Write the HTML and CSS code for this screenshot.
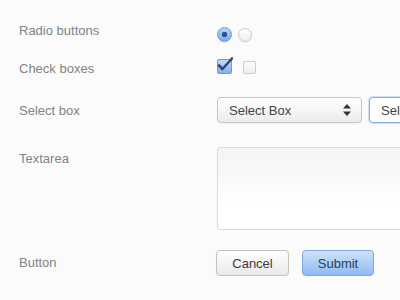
FILE: index.html
```html
<!DOCTYPE html>
<html lang="en">
<head>
    <meta charset="UTF-8">
    <meta name="viewport" content="width=device-width, initial-scale=1.0">
    <title>Form Elements</title>
    <link rel="stylesheet" href="styles.css">
</head>
<body>
    <form class="form">
        <div class="row row-radio">
            <div class="label">Radio buttons</div>
            <div class="controls">
                <input type="radio" name="choice" class="radio" checked>
                <input type="radio" name="choice" class="radio">
            </div>
        </div>
        <div class="row row-check">
            <div class="label">Check boxes</div>
            <div class="controls">
                <span class="check-wrap">
                    <input type="checkbox" class="checkbox" checked>
                    <svg class="check-mark" width="16" height="14" viewBox="0 0 16 14">
                        <path d="M2 8.5 L5.5 12 L15 1.5" fill="none" stroke="#2c4a78" stroke-width="2.6" stroke-linecap="round" stroke-linejoin="round"/>
                    </svg>
                </span>
                <input type="checkbox" class="checkbox checkbox-plain">
            </div>
        </div>
        <div class="row row-select">
            <div class="label">Select box</div>
            <div class="controls">
                <div class="select">
                    <span>Select Box</span>
                    <svg class="arrows" width="8" height="12" viewBox="0 0 8 12">
                        <path d="M4 0 L8 4.5 L0 4.5 Z" fill="#333"/>
                        <path d="M4 12 L8 7.5 L0 7.5 Z" fill="#333"/>
                    </svg>
                </div>
                <div class="select select-focus">
                    <span>Select Box</span>
                </div>
            </div>
        </div>
        <div class="row row-text">
            <div class="label">Textarea</div>
            <div class="controls">
                <textarea class="textarea"></textarea>
            </div>
        </div>
        <div class="row row-button">
            <div class="label">Button</div>
            <div class="controls">
                <button type="button" class="btn">Cancel</button>
                <button type="submit" class="btn btn-primary">Submit</button>
            </div>
        </div>
    </form>
</body>
</html>
```

FILE: styles.css
```css
html {
    overflow: hidden;
}
body {
    background-color: #fbfbfb;
    font-family: "Liberation Sans", Arial, sans-serif;
    font-size: 13px;
    margin: 0;
    padding: 0;
}
.form {
    padding: 23px 0 0 19px;
}
.row {
    display: flex;
    align-items: flex-start;
}
.label {
    width: 198px;
    flex-shrink: 0;
    line-height: 15px;
    color: #838383;
}
.controls {
    display: flex;
    align-items: center;
    flex-shrink: 0;
}

/* radios */
.row-radio .controls {
    margin-top: 4px;
    gap: 6px;
}
.radio {
    appearance: none;
    margin: 0;
    width: 14px;
    height: 14px;
    border: 1px solid #cbcbcb;
    border-radius: 50%;
    background: linear-gradient(#ffffff, #ececec);
    box-shadow: 0 1px 1px rgba(0, 0, 0, 0.05);
}
.radio:checked {
    width: 15px;
    height: 15px;
    border-color: #6a9ae0;
    background: radial-gradient(circle, #2b5596 0, #2b5596 2.5px, transparent 3px), linear-gradient(#b9d3f6, #7eaaea);
}

/* checkboxes */
.row-check {
    margin-top: 17px;
}
.row-check .label {
    padding-top: 2px;
}
.row-check .controls {
    gap: 11px;
}
.check-wrap {
    position: relative;
    display: block;
    width: 15px;
    height: 15px;
}
.checkbox {
    appearance: none;
    margin: 0;
    display: block;
    width: 13px;
    height: 13px;
    border: 1px solid #cdcdcd;
    border-radius: 2px;
    background: linear-gradient(#ffffff, #ebebeb);
}
.check-wrap .checkbox {
    width: 15px;
    height: 15px;
    border-color: #6a9ae0;
    background: linear-gradient(#c2daf8, #86b0ec);
}
.check-mark {
    position: absolute;
    left: 0;
    top: -2px;
}
.checkbox-plain {
    margin-top: 2px;
}

/* select */
.row-select {
    margin-top: 21px;
}
.row-select .label {
    padding-top: 6px;
}
.row-select .controls {
    gap: 7px;
}
.select {
    box-sizing: border-box;
    width: 145px;
    height: 26px;
    padding: 0 10px 0 11px;
    display: flex;
    align-items: center;
    justify-content: space-between;
    border: 1px solid #c6c6c6;
    border-radius: 4px;
    background: linear-gradient(#ffffff, #ececec);
    color: #444;
    box-shadow: 0 1px 1px rgba(0, 0, 0, 0.04);
}
.select-focus {
    border-color: #8eb3e8;
    background: #fff;
    box-shadow: 0 0 0 1px rgba(150, 185, 235, 0.45);
}

/* textarea */
.row-text {
    margin-top: 24px;
}
.row-text .label {
    padding-top: 4px;
}
.textarea {
    box-sizing: border-box;
    display: block;
    width: 300px;
    height: 83px;
    margin: 0;
    border: 1px solid #d9d9d9;
    border-radius: 3px;
    background: linear-gradient(#f4f4f4, #ffffff 70%);
    resize: none;
}

/* buttons */
.row-button {
    margin-top: 20px;
}
.row-button .label {
    padding-top: 5px;
}
.row-button .controls {
    margin-left: -1px;
    gap: 13px;
}
.btn {
    box-sizing: border-box;
    width: 73px;
    height: 26px;
    padding: 0;
    font-family: "Liberation Sans", Arial, sans-serif;
    font-size: 13px;
    color: #3c3c3c;
    border: 1px solid #c2c2c2;
    border-radius: 4px;
    background: linear-gradient(#ffffff, #e9e9e9);
    box-shadow: 0 1px 1px rgba(0, 0, 0, 0.05);
    cursor: pointer;
}
.btn-primary {
    width: 72px;
    color: #2a3d58;
    border-color: #7ea8e2;
    background: linear-gradient(#cfe2fb, #8fbaf1);
}
```
